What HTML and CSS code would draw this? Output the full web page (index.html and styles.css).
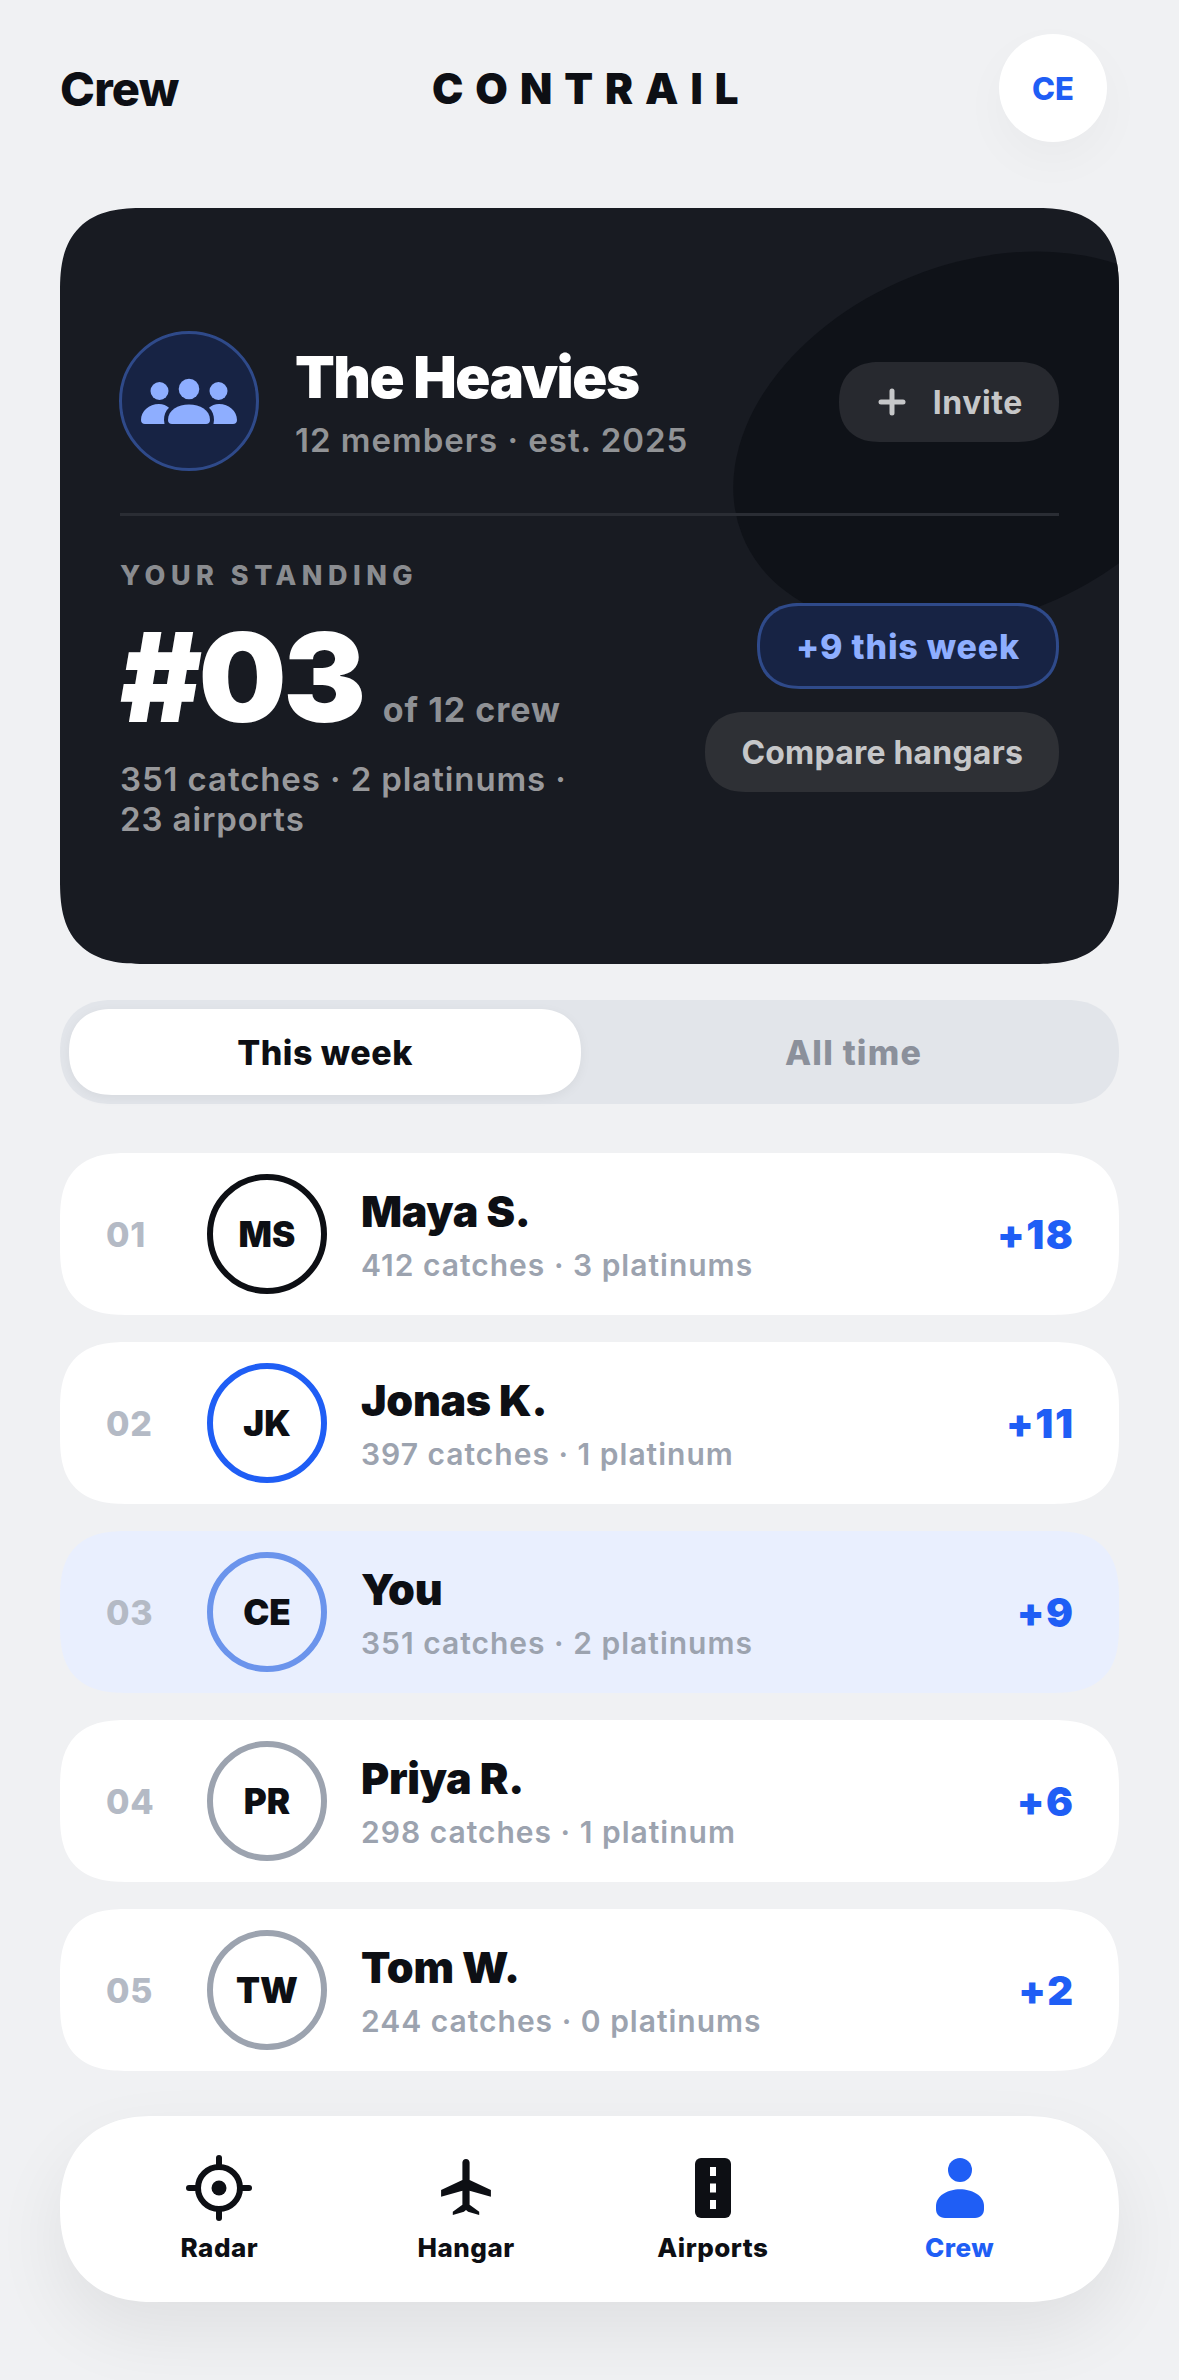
FILE: index.html
```html
<!DOCTYPE html>
<html lang="en">
<head>
  <meta charset="UTF-8" />
  <meta name="viewport" content="width=device-width, initial-scale=1.0" />
  <title>Contrail Crew</title>
  <link rel="stylesheet" href="styles.css">
</head>
<body>

<header class="topbar">
  <span class="topbar-title">Crew</span>
  <span class="brand">CONTRAIL</span>
  <span class="me">CE</span>
</header>

<section class="card">
  <div class="blob"></div>

  <div class="team">
    <div class="team-icon">
      <svg width="96" height="96" viewBox="0 0 96 96" fill="#8eaeff">
        <circle cx="48" cy="36" r="10.3"/>
        <circle cx="18.5" cy="38" r="9"/>
        <circle cx="77.5" cy="38" r="9"/>
        <path d="M27 67C27 57 37 51.5 48 51.5S69 57 69 67C69 69.500 67.500 71 65 71H31C28.500 71 27 69.500 27 67Z"/>
        <path d="M0 67C0 58 8 51 18 51C22 51 25.500 52.500 28 54.700C24.500 58 23 62 23 67L23.500 71H4C1.500 71 0 69.500 0 67Z"/>
        <path d="M96 67C96 58 88 51 78 51C74 51 70.500 52.500 68 54.700C71.500 58 73 62 73 67L72.500 71H92C94.500 71 96 69.500 96 67Z"/>
      </svg>
    </div>
    <div class="team-info">
      <h1>The Heavies</h1>
      <p>12 members · est. 2025</p>
    </div>
    <button class="invite">
      <svg width="30" height="30" viewBox="0 0 30 30" stroke="#c6c7c9" stroke-width="5" stroke-linecap="round">
        <line x1="15" y1="4" x2="15" y2="26"/>
        <line x1="4" y1="15" x2="26" y2="15"/>
      </svg>
      Invite
    </button>
  </div>

  <div class="standing">
    <div class="standing-left">
      <div class="eyebrow">YOUR STANDING</div>
      <div class="rank"><strong>#03</strong><span>of 12 crew</span></div>
      <p class="stats">351 catches · 2 platinums · 23 airports</p>
    </div>
    <div class="standing-right">
      <span class="delta">+9 this week</span>
      <button class="compare">Compare hangars</button>
    </div>
  </div>
</section>

<div class="tabs">
  <div class="tab active">This week</div>
  <div class="tab tab-off">All time</div>
</div>

<main class="list">
  <div class="row">
    <span class="pos">01</span>
    <span class="ring ring-black">MS</span>
    <div class="who"><h3>Maya S.</h3><p>412 catches · 3 platinums</p></div>
    <span class="score">+18</span>
  </div>
  <div class="row">
    <span class="pos">02</span>
    <span class="ring ring-blue">JK</span>
    <div class="who"><h3>Jonas K.</h3><p>397 catches · 1 platinum</p></div>
    <span class="score">+11</span>
  </div>
  <div class="row row-me">
    <span class="pos">03</span>
    <span class="ring ring-light">CE</span>
    <div class="who"><h3>You</h3><p>351 catches · 2 platinums</p></div>
    <span class="score">+9</span>
  </div>
  <div class="row">
    <span class="pos">04</span>
    <span class="ring ring-grey">PR</span>
    <div class="who"><h3>Priya R.</h3><p>298 catches · 1 platinum</p></div>
    <span class="score">+6</span>
  </div>
  <div class="row">
    <span class="pos">05</span>
    <span class="ring ring-grey">TW</span>
    <div class="who"><h3>Tom W.</h3><p>244 catches · 0 platinums</p></div>
    <span class="score">+2</span>
  </div>
</main>

<nav class="tabbar">
  <div class="nav-item">
    <svg width="72" height="72" viewBox="0 0 24 24" fill="none" stroke="#0d0f14" stroke-width="2" stroke-linecap="round">
      <circle cx="12" cy="12" r="7"/>
      <circle cx="12" cy="12" r="2.500" fill="#0d0f14" stroke="none"/>
      <line x1="12" y1="2" x2="12" y2="5"/>
      <line x1="12" y1="19" x2="12" y2="22"/>
      <line x1="2" y1="12" x2="5" y2="12"/>
      <line x1="19" y1="12" x2="22" y2="12"/>
    </svg>
    <span>Radar</span>
  </div>
  <div class="nav-item">
    <svg width="72" height="72" viewBox="0 0 24 24" fill="#0d0f14">
      <path d="M12 2.300C12.700 2.300 13.200 2.800 13.200 3.500V9.300L20.300 12.700V14.900L13.200 12.900V17.600L16.400 19.900V21L12.700 19.900L12 19.300L11.300 19.900L7.600 21V19.900L10.800 17.600V12.900L3.700 14.900V12.700L10.800 9.300V3.500C10.800 2.800 11.300 2.300 12 2.300Z"/>
    </svg>
    <span>Hangar</span>
  </div>
  <div class="nav-item">
    <svg width="72" height="72" viewBox="0 0 24 24" fill="#0d0f14">
      <rect x="6" y="2" width="12" height="20" rx="2"/>
      <rect x="11" y="5" width="2" height="3" fill="#fff"/>
      <rect x="11" y="10.500" width="2" height="3" fill="#fff"/>
      <rect x="11" y="16" width="2" height="3" fill="#fff"/>
    </svg>
    <span>Airports</span>
  </div>
  <div class="nav-item nav-active">
    <svg width="72" height="72" viewBox="0 0 24 24" fill="#1f5ef5">
      <circle cx="12" cy="6" r="4"/>
      <path d="M4 18C4 14.500 8 12.400 12 12.400S20 14.500 20 18V19C20 20.800 18.800 22 17 22H7C5.200 22 4 20.800 4 19Z"/>
    </svg>
    <span>Crew</span>
  </div>
</nav>

</body>
</html>
```

FILE: styles.css
```css
* {
  box-sizing: border-box;
}

body {
  margin: 0;
  height: 2380px;
  padding: 0 60px;
  overflow: hidden;
  font-family: Inter, "Liberation Sans", sans-serif;
  background: #f0f1f3;
  color: #0d0f14;
}

h1, h3, p {
  margin: 0;
}

button {
  font-family: inherit;
  border: none;
}

/* top bar */
.topbar {
  display: flex;
  justify-content: space-between;
  align-items: center;
  padding: 34px 0 0;
  height: 142px;
  margin-bottom: 66px;
}

.topbar-title {
  font-size: 47px;
  font-weight: 800;
  letter-spacing: -0.800px;
}

.brand {
  font-size: 42px;
  font-weight: 900;
  letter-spacing: 12px;
  margin-left: 5px;
}

.me {
  width: 108px;
  height: 108px;
  margin-right: 12px;
  border-radius: 50%;
  background: #fff;
  color: #1f5ef5;
  font-size: 31px;
  font-weight: 800;
  display: flex;
  align-items: center;
  justify-content: center;
  box-shadow: 0 18px 48px rgba(0,0,0,0.03);
}

/* dark team card */
.card {
  position: relative;
  overflow: hidden;
  height: 756px;
  padding: 123px 60px 0;
  border-radius: 72px;
  background: #181b22;
}

.blob {
  position: absolute;
  left: 664px;
  top: 56px;
  width: 506px;
  height: 354px;
  border-radius: 50%;
  background: #0f1218;
  transform: rotate(-22deg);
}

.team {
  position: relative;
  display: flex;
  align-items: center;
  gap: 36px;
  padding-bottom: 42px;
  border-bottom: 3px solid #2a2d34;
}

.team-icon {
  width: 140px;
  height: 140px;
  flex: none;
  margin-left: -1px;
  border-radius: 50%;
  background: #172344;
  border: 3px solid #2f4a8a;
  display: flex;
  align-items: center;
  justify-content: center;
}

.team-info {
  flex: 1;
  padding-top: 4px;
}

.team-info h1 {
  font-size: 58px;
  font-weight: 900;
  letter-spacing: -1.500px;
  line-height: 60px;
  color: #fff;
}

.team-info p {
  margin-top: 13px;
  font-size: 33px;
  font-weight: 600;
  letter-spacing: 1px;
  color: #919396;
}

.invite {
  display: flex;
  align-items: center;
  gap: 26px;
  height: 80px;
  margin-top: 2px;
  padding: 0 36px 0 38px;
  border-radius: 40px;
  background: #27292f;
  color: #c6c7c9;
  font-size: 32px;
  font-weight: 700;
  letter-spacing: 0.600px;
}

.standing {
  position: relative;
  display: flex;
  justify-content: space-between;
}

.eyebrow {
  margin-top: 43px;
  font-size: 27px;
  font-weight: 800;
  letter-spacing: 5.500px;
  color: #8a8c90;
}

.rank {
  display: flex;
  align-items: baseline;
  gap: 20px;
  margin-top: 22px;
  line-height: 126px;
}

.rank strong {
  font-size: 124px;
  font-weight: 900;
  letter-spacing: -3.500px;
  color: #fff;
}

.rank span {
  font-size: 34px;
  font-weight: 700;
  letter-spacing: 1px;
  color: #8f9195;
}

.stats {
  width: 470px;
  margin-top: -14px;
  font-size: 33px;
  line-height: 40px;
  font-weight: 600;
  letter-spacing: 0.900px;
  color: #98999c;
}

.standing-right {
  display: flex;
  flex-direction: column;
  align-items: flex-end;
  gap: 23px;
  padding-top: 87px;
}

.delta {
  display: flex;
  align-items: center;
  height: 86px;
  padding: 0 36px;
  border-radius: 43px;
  background: #172344;
  border: 3px solid #2f4a8a;
  color: #8eaeff;
  font-size: 34px;
  font-weight: 800;
  letter-spacing: 0.800px;
}

.compare {
  height: 80px;
  padding: 0 36px;
  border-radius: 40px;
  background: #2e3035;
  color: #c6c7c9;
  font-size: 32px;
  font-weight: 700;
  letter-spacing: 0.200px;
}

/* week / all time switch */
.tabs {
  display: grid;
  grid-template-columns: 512px 1fr;
  height: 104px;
  margin-top: 36px;
  padding: 9px;
  border-radius: 52px;
  background: #e2e5ea;
}

.tab {
  display: flex;
  align-items: center;
  justify-content: center;
  border-radius: 43px;
  font-size: 34px;
  font-weight: 800;
  letter-spacing: 0.500px;
  color: #8b909b;
}

.tab-off {
  padding-left: 16px;
  letter-spacing: 1.200px;
}

.tab.active {
  background: #fff;
  color: #0d0f14;
  box-shadow: 0 3px 12px rgba(0,0,0,0.05);
}

/* leaderboard */
.list {
  display: flex;
  flex-direction: column;
  gap: 27px;
  margin-top: 49px;
}

.row {
  display: flex;
  align-items: center;
  height: 162px;
  padding: 0 46px;
  border-radius: 60px;
  background: #fff;
}

.row-me {
  background: #e9effe;
}

.pos {
  width: 101px;
  font-size: 34px;
  font-weight: 800;
  letter-spacing: 0.800px;
  color: #b4bac5;
}

.ring {
  width: 120px;
  height: 120px;
  flex: none;
  border-radius: 50%;
  border: 6px solid;
  font-size: 35px;
  font-weight: 900;
  color: #0d0f14;
  display: flex;
  align-items: center;
  justify-content: center;
}

.ring-black { border-color: #0d0f14; }
.ring-blue { border-color: #1f5ef5; }
.ring-light { border-color: #6b94ec; }
.ring-grey { border-color: #9ca3af; }

.who {
  flex: 1;
  margin-left: 34px;
}

.who h3 {
  font-size: 43px;
  font-weight: 900;
  line-height: 50px;
  letter-spacing: -0.300px;
}

.who p {
  margin-top: 11px;
  font-size: 30px;
  font-weight: 600;
  letter-spacing: 1px;
  color: #9ca3af;
}

.score {
  margin-right: -1.500px;
  font-size: 40px;
  font-weight: 900;
  letter-spacing: 1.500px;
  color: #1f5ef5;
}

/* bottom nav */
.tabbar {
  display: grid;
  grid-template-columns: repeat(4, 1fr);
  height: 186px;
  margin-top: 45px;
  padding: 0 36px;
  align-items: center;
  border-radius: 93px;
  background: #fff;
  box-shadow: 0 30px 72px rgba(0,0,0,0.07);
}

.nav-item {
  display: flex;
  flex-direction: column;
  align-items: center;
  gap: 8px;
  padding-bottom: 3px;
  font-size: 26px;
  font-weight: 800;
  letter-spacing: 0.500px;
}

.nav-item svg {
  display: block;
}

.nav-active {
  color: #1f5ef5;
}

/* corners in the reference are continuous, not circular */
@supports (corner-shape: squircle) {
  .card { border-radius: 84px; corner-shape: superellipse(1.4); }
  .row { border-radius: 68px; corner-shape: superellipse(1.4); }
  .tabbar { corner-shape: superellipse(1.2); }
  .tabs, .tab { corner-shape: superellipse(1.2); }
  .invite, .delta, .compare { corner-shape: superellipse(1.2); }
}
```
